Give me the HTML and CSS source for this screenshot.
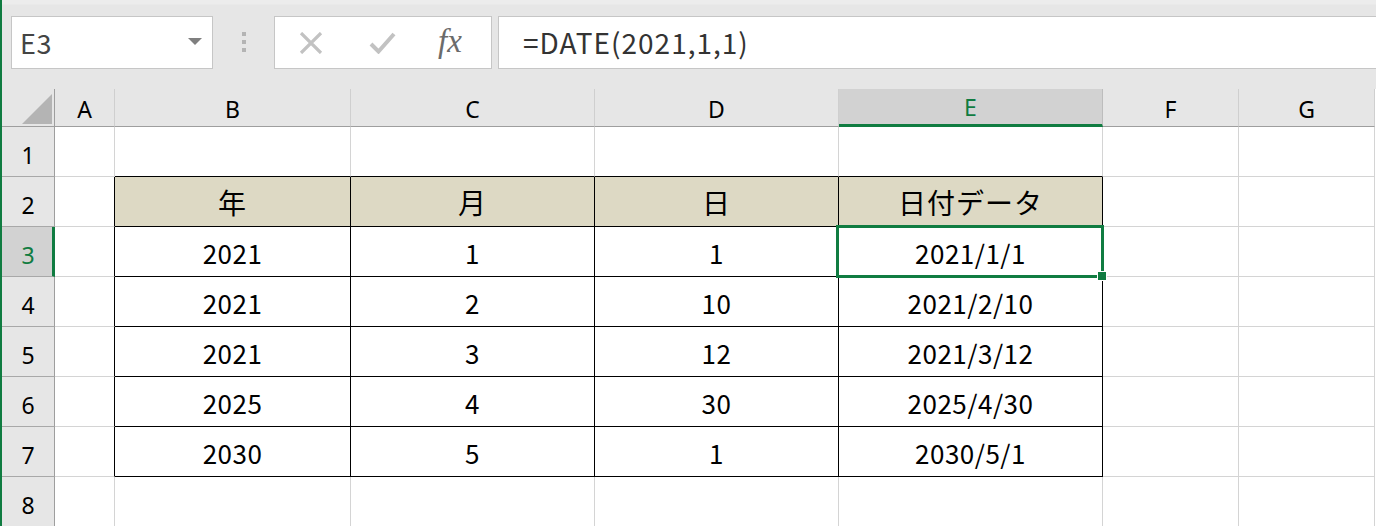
FILE: index.html
```html
<!DOCTYPE html>
<html>
<head>
    <meta charset="UTF-8">
    <title>DATE関数</title>
    <link rel="stylesheet" href="styles.css">
</head>
<body>
    <div class="app">
        <!-- 数式バー -->
        <div class="formula-bar">
            <div class="name-box">
                <span class="name-text">E3</span>
                <span class="name-arrow"></span>
            </div>
            <div class="grip">
                <span></span><span></span><span></span>
            </div>
            <div class="fx-buttons">
                <svg class="btn-icon" width="24" height="22" viewBox="0 0 24 22">
                    <path d="M2 1 L22 21 M22 1 L2 21" stroke="#c2c2c2" stroke-width="3.2" fill="none"/>
                </svg>
                <svg class="btn-icon" width="27" height="22" viewBox="0 0 27 22">
                    <path d="M2 12 L9.5 19.5 L25 2" stroke="#c2c2c2" stroke-width="4" fill="none"/>
                </svg>
                <span class="fx">fx</span>
            </div>
            <div class="formula-input">=DATE(2021,1,1)</div>
        </div>

        <!-- シート -->
        <div class="sheet">
            <div class="ch corner">
                <svg width="30" height="30" viewBox="0 0 30 30"><polygon points="30,0 30,30 0,30" fill="#b4b4b4"/></svg>
            </div>
            <div class="ch">A</div>
            <div class="ch">B</div>
            <div class="ch">C</div>
            <div class="ch">D</div>
            <div class="ch active-col">E</div>
            <div class="ch">F</div>
            <div class="ch">G</div>

            <div class="rh">1</div>
            <div class="cell"></div>
            <div class="cell tt"></div>
            <div class="cell tt"></div>
            <div class="cell tt"></div>
            <div class="cell tt"></div>
            <div class="cell"></div>
            <div class="cell"></div>

            <div class="rh">2</div>
            <div class="cell tl"></div>
            <div class="cell t head">年</div>
            <div class="cell t head">月</div>
            <div class="cell t head">日</div>
            <div class="cell t head">日付データ</div>
            <div class="cell"></div>
            <div class="cell"></div>

            <div class="rh active-row">3</div>
            <div class="cell tl"></div>
            <div class="cell t">2021</div>
            <div class="cell t">1</div>
            <div class="cell t">1</div>
            <div class="cell t selected">2021/1/1</div>
            <div class="cell"></div>
            <div class="cell"></div>

            <div class="rh">4</div>
            <div class="cell tl"></div>
            <div class="cell t">2021</div>
            <div class="cell t">2</div>
            <div class="cell t">10</div>
            <div class="cell t">2021/2/10</div>
            <div class="cell"></div>
            <div class="cell"></div>

            <div class="rh">5</div>
            <div class="cell tl"></div>
            <div class="cell t">2021</div>
            <div class="cell t">3</div>
            <div class="cell t">12</div>
            <div class="cell t">2021/3/12</div>
            <div class="cell"></div>
            <div class="cell"></div>

            <div class="rh">6</div>
            <div class="cell tl"></div>
            <div class="cell t">2025</div>
            <div class="cell t">4</div>
            <div class="cell t">30</div>
            <div class="cell t">2025/4/30</div>
            <div class="cell"></div>
            <div class="cell"></div>

            <div class="rh">7</div>
            <div class="cell tl"></div>
            <div class="cell t">2030</div>
            <div class="cell t">5</div>
            <div class="cell t">1</div>
            <div class="cell t">2030/5/1</div>
            <div class="cell"></div>
            <div class="cell"></div>

            <div class="rh">8</div>
            <div class="cell"></div>
            <div class="cell"></div>
            <div class="cell"></div>
            <div class="cell"></div>
            <div class="cell"></div>
            <div class="cell"></div>
            <div class="cell"></div>
        </div>
    </div>
</body>
</html>
```

FILE: styles.css
```css
* {
    box-sizing: border-box;
    margin: 0;
    padding: 0;
}
body {
    font-family: "Noto Sans CJK JP", "Noto Sans", sans-serif;
    background-color: #fff;
    overflow: hidden;
}
.app {
    border-left: 2px solid #107c41;
    height: 526px;
}

/* 数式バー */
.formula-bar {
    display: flex;
    align-items: flex-start;
    height: 89px;
    padding-top: 16px;
    background: linear-gradient(#ececec 0, #ececec 4px, #e6e6e6 5px);
}
.name-box {
    display: flex;
    align-items: center;
    justify-content: space-between;
    width: 202px;
    height: 53px;
    margin-left: 9px;
    padding: 0 10px 0 8px;
    background-color: #fff;
    border: 1px solid #c6c6c6;
}
.name-text {
    font-size: 27px;
    color: #444;
    letter-spacing: 0.5px;
}
.name-arrow {
    width: 0;
    height: 0;
    border-left: 7px solid transparent;
    border-right: 7px solid transparent;
    border-top: 7px solid #7f7f7f;
    margin-bottom: 3px;
}
.grip {
    display: flex;
    flex-direction: column;
    align-items: center;
    gap: 4px;
    width: 61px;
    padding-top: 16px;
}
.grip span {
    width: 4px;
    height: 4px;
    background-color: #b4b4b4;
}
.fx-buttons {
    display: flex;
    align-items: center;
    width: 218px;
    height: 53px;
    padding-left: 24px;
    background-color: #fff;
    border: 1px solid #c6c6c6;
}
.btn-icon {
    margin-right: 46px;
}
.btn-icon + .btn-icon {
    margin-right: 42px;
}
.fx {
    font-family: "Liberation Serif", "DejaVu Serif", serif;
    font-style: italic;
    font-size: 33px;
    color: #6b6b6b;
    margin-top: -2px;
}
.formula-input {
    flex: 1;
    height: 53px;
    margin-left: 6px;
    margin-right: -4px;
    padding-left: 24px;
    background-color: #fff;
    border: 1px solid #c6c6c6;
    font-size: 28px;
    letter-spacing: 1px;
    line-height: 51px;
    color: #333;
}

/* シート */
.sheet {
    display: grid;
    grid-template-columns: 53px 60px 236px 244px 244px 264px 136px 136px;
    grid-template-rows: 38px repeat(8, 50px);
}
.ch {
    display: flex;
    align-items: center;
    justify-content: center;
    background-color: #e6e6e6;
    border-right: 1px solid #cfcfcf;
    border-bottom: 1px solid #9e9e9e;
    font-family: "Noto Sans", sans-serif;
    font-size: 23px;
    color: #000;
    padding-top: 2px;
}
.corner {
    align-items: flex-end;
    justify-content: flex-end;
    padding: 0 2px 2px 0;
    border-right-color: #9e9e9e;
}
.active-col {
    background-color: #d2d2d2;
    color: #107c41;
    border-right-color: #bdbdbd;
    border-bottom: 3px solid #107c41;
    padding-top: 0;
}
.rh {
    display: flex;
    align-items: center;
    justify-content: center;
    background-color: #e6e6e6;
    border-right: 1px solid #9e9e9e;
    border-bottom: 1px solid #a8a8a8;
    font-family: "Noto Sans", sans-serif;
    font-size: 23px;
    color: #000;
    padding-top: 6px;
}
.active-row {
    background-color: #d2d2d2;
    color: #107c41;
    border-right: 3px solid #107c41;
    padding-left: 2px;
}
.cell {
    display: flex;
    align-items: center;
    justify-content: center;
    border-right: 1px solid #d4d4d4;
    border-bottom: 1px solid #d4d4d4;
    font-size: 26px;
    letter-spacing: 0.5px;
    color: #000;
    padding-top: 1px;
}
.t {
    border-right-color: #000;
    border-bottom-color: #000;
}
.tl {
    border-right-color: #000;
}
.tt {
    border-bottom-color: #000;
}
.head {
    background-color: #ddd9c4;
    font-size: 28px;
    letter-spacing: 1px;
}

/* 選択セル */
.selected {
    position: relative;
}
.selected::before {
    content: "";
    position: absolute;
    left: -3px;
    top: -2px;
    right: -2px;
    bottom: -2px;
    border: 3px solid #107c41;
}
.selected::after {
    content: "";
    position: absolute;
    right: -5px;
    bottom: -5px;
    width: 8px;
    height: 8px;
    background-color: #107c41;
    border: 1px solid #fff;
}
```
